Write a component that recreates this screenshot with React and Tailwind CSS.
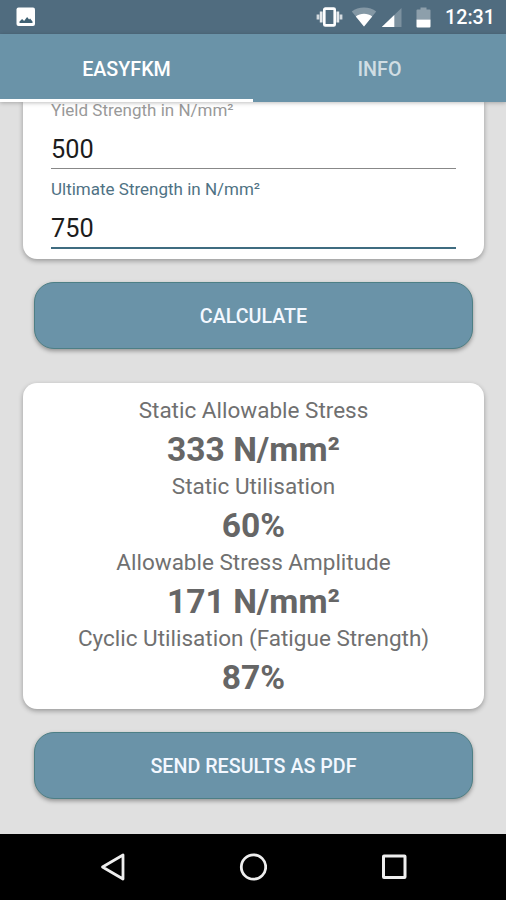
import React, { useState } from "react";

const results = [
  { label: "Static Allowable Stress", value: "333 N/mm²" },
  { label: "Static Utilisation", value: "60%" },
  { label: "Allowable Stress Amplitude", value: "171 N/mm²" },
  { label: "Cyclic Utilisation (Fatigue Strength)", value: "87%" },
];

function StatusBar() {
  return (
    <div className="flex h-[34px] shrink-0 items-start justify-between bg-[#506c7f] pt-[7px] pr-[11px] pl-4">
      <svg width="20" height="20" viewBox="0 0 20 20">
        <rect x="0.5" y="0.5" width="18.5" height="18.5" rx="2" fill="#fff" />
        <path d="M3.5 16v-1.5l2.6-2.5 2 2 3-4 2 2.5 1-1 2.4 3V16z" fill="#3f6173" />
      </svg>
      <div className="flex items-start">
        <svg width="27" height="20" viewBox="0 0 27 20">
          <rect x="8.3" y="1.6" width="10.4" height="16.8" rx="1" fill="none" stroke="#fff" strokeWidth="2.6" />
          <path d="M5.2 4.5v11M21.8 4.5v11" stroke="#fff" strokeOpacity="0.85" strokeWidth="2.8" />
          <path d="M2 7.5v5M25 7.5v5" stroke="#fff" strokeOpacity="0.75" strokeWidth="2.8" />
        </svg>
        <svg className="ml-2" width="26" height="20" viewBox="0 0 26 20">
          <path d="M13 19.5L0.8 4.5C4 2 8.3 0.6 13 0.6s9 1.4 12.2 3.9z" fill="#fff" fillOpacity="0.3" />
          <path d="M13 19.5L4.8 9.4C7 7.7 10 6.8 13 6.8s6 0.9 8.2 2.6z" fill="#fff" />
        </svg>
        <svg className="ml-1" width="21" height="20" viewBox="0 0 21 20">
          <path d="M20.5 1v19H0.8z" fill="#fff" fillOpacity="0.25" />
          <path d="M13.3 7.9V20H0.8z" fill="#fff" />
        </svg>
        <svg className="ml-3.5" width="15" height="21" viewBox="0 0 15 21">
          <path d="M1.5 2.5h3V0.5h6v2h3a1 1 0 0 1 1 1v9h-14v-9a1 1 0 0 1 1-1z" fill="#fff" fillOpacity="0.35" />
          <path d="M0.5 12.5h14v7a1 1 0 0 1-1 1h-12a1 1 0 0 1-1-1z" fill="#fff" />
        </svg>
        <span className="ml-[14px] pt-px text-[19.7px] leading-5 font-medium text-white">12:31</span>
      </div>
    </div>
  );
}

function Tabs({ active, onChange }) {
  return (
    <div className="z-10 flex h-[67.5px] shrink-0 bg-[#6a93a8] shadow-[0_1px_4px_rgba(0,0,0,0.25)]">
      {["EASYFKM", "INFO"].map((tab) => (
        <button
          key={tab}
          onClick={() => onChange(tab)}
          className={`flex-1 border-b-[3px] pt-[7px] text-[19.7px] font-medium ${
            active === tab ? "border-white text-white" : "border-transparent text-white/70"
          }`}
        >
          {tab}
        </button>
      ))}
    </div>
  );
}

function ActionButton({ children }) {
  return (
    <button className="mr-[33px] ml-[34px] h-[67.5px] shrink-0 rounded-[20px] border border-[#4d7f85] bg-[#6a93a8] pt-[3px] text-[19.7px] font-medium text-[#f3f8ff] shadow-[0_2px_4px_rgba(0,0,0,0.35)]">
      {children}
    </button>
  );
}

function NavBar() {
  return (
    <div className="flex h-[66.5px] shrink-0 items-center justify-center gap-[112.5px] bg-black">
      <svg width="28" height="28" viewBox="0 0 28 28" fill="none" stroke="#eee" strokeWidth="2.8">
        <path d="M24 2v24L3.5 14z" strokeLinejoin="round" />
      </svg>
      <svg width="28" height="28" viewBox="0 0 28 28" fill="none" stroke="#eee" strokeWidth="2.8">
        <circle cx="14.5" cy="14" r="12.2" />
      </svg>
      <svg width="28" height="28" viewBox="0 0 28 28" fill="none" stroke="#eee" strokeWidth="3">
        <rect x="3.5" y="3" width="21.5" height="21.5" rx="0.5" />
      </svg>
    </div>
  );
}

function App() {
  const [tab, setTab] = useState("EASYFKM");

  return (
    <div className="flex h-[900px] w-[506px] flex-col overflow-hidden bg-[#e0e0e0] font-[Roboto,sans-serif]">
      <StatusBar />
      <Tabs active={tab} onChange={setTab} />

      <main className="flex flex-1 flex-col overflow-hidden">
        <div className="mr-[22px] ml-[23px] -mt-[1.5px] flex h-[159px] shrink-0 flex-col rounded-b-[14px] bg-white px-7 shadow-[0_2px_5px_rgba(0,0,0,0.32)]">
          <label className="h-5 text-[17px] leading-[21px] text-[#999]">Yield Strength in N/mm²</label>
          <div className="h-[49px] border-b border-[#888] pt-[11px] text-[25.3px] leading-[38px] text-[#1c1c1c]">
            500
          </div>
          <label className="mt-[10px] h-5 text-[17px] leading-5 text-[#4f7284]">Ultimate Strength in N/mm²</label>
          <div className="h-[50px] border-b-[2px] border-[#3f6c80] pt-[11px] text-[25.3px] leading-[38px] text-[#1c1c1c]">
            750
          </div>
        </div>

        <div className="mt-[22.5px] flex flex-col">
          <ActionButton>CALCULATE</ActionButton>
        </div>

        <div className="mt-[34px] mr-[22px] ml-[23px] h-[326px] shrink-0 rounded-[14px] bg-white pt-2 text-center text-[#666] shadow-[0_2px_5px_rgba(0,0,0,0.32)]">
          {results.map((item) => (
            <div key={item.label}>
              <p className="h-[38px] text-[22.5px] leading-[38px] text-[#707070]">{item.label}</p>
              <p className="h-[38px] text-[33.6px] leading-[42px] font-bold">{item.value}</p>
            </div>
          ))}
        </div>

        <div className="mt-[22.5px] flex flex-col">
          <ActionButton>SEND RESULTS AS PDF</ActionButton>
        </div>
      </main>

      <NavBar />
    </div>
  );
}

export default App;
